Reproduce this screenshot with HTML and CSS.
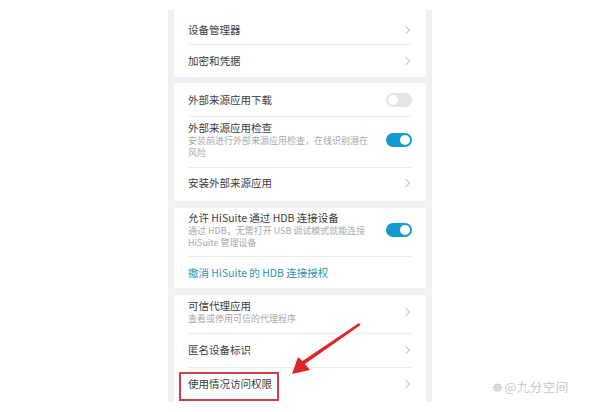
FILE: index.html
```html
<!DOCTYPE html>
<html lang="zh">
<head>
<meta charset="utf-8">
<link rel="stylesheet" href="styles.css">
</head>
<body>
<div class="stage">
  <div class="phone">
    <div class="card">
      <div class="row r35 first"><div class="txt"><div class="title">设备管理器</div></div><span class="chev"></span></div>
      <div class="row r32 last"><div class="txt"><div class="title">加密和凭据</div></div><span class="chev"></span></div>
    </div>
    <div class="card">
      <div class="row r34"><div class="txt"><div class="title">外部来源应用下载</div></div><span class="toggle"></span></div>
      <div class="row r51 multi"><div class="txt"><div class="title">外部来源应用检查</div><div class="sub">安装前进行外部来源应用检查，在线识别潜在<br>风险</div></div><span class="toggle on"></span></div>
      <div class="row r33 last up"><div class="txt"><div class="title">安装外部来源应用</div></div><span class="chev"></span></div>
    </div>
    <div class="card">
      <div class="row r49 multi"><div class="txt"><div class="title">允许 HiSuite 通过 HDB 连接设备</div><div class="sub">通过 HDB，无需打开 USB 调试模式就能连接<br>HiSuite 管理设备</div></div><span class="toggle on"></span></div>
      <div class="row r31 last"><div class="txt"><div class="title link">撤消 HiSuite 的 HDB 连接授权</div></div></div>
    </div>
    <div class="card">
      <div class="row r39 multi"><div class="txt"><div class="title">可信代理应用</div><div class="sub">查看或停用可信的代理程序</div></div><span class="chev"></span></div>
      <div class="row r34 up"><div class="txt"><div class="title">匿名设备标识</div></div><span class="chev"></span></div>
      <div class="row r35 last up"><div class="txt"><div class="title">使用情况访问权限</div></div><span class="chev"></span></div>
    </div>
  </div>
  <div class="highlight"></div>
  <svg class="arrow" width="80" height="60" viewBox="0 0 80 60">
    <path d="M75 4 L76.5 6 L21 45 L26 51 L8 55 L14 38 L18.5 42 Z" fill="#e0252a"/>
  </svg>
  <div class="watermark"><span class="wm-logo">☸</span>@九分空间</div>
</div>
</body>
</html>
```

FILE: styles.css
```css
html, body {
  margin: 0;
  padding: 0;
  background: #ffffff;
  overflow: hidden;
}
.stage {
  position: relative;
  width: 600px;
  height: 412px;
  box-sizing: border-box;
  padding-top: 10px;
  font-family: "Noto Sans CJK SC", "Noto Sans", sans-serif;
}
.phone {
  position: relative;
  margin-left: 168px;
  width: 252px;
  padding: 0 6px;
  height: 392px;
  background: #f1f1f1;
  display: flex;
  flex-direction: column;
  gap: 6px;
}
.card {
  background: #ffffff;
  display: flex;
  flex-direction: column;
}
.card + .card + .card { margin-top: 1px; }
.row {
  display: flex;
  align-items: center;
  padding: 0 14px;
  position: relative;
  box-sizing: border-box;
}
.row::after {
  content: "";
  position: absolute;
  left: 14px;
  right: 14px;
  bottom: 0;
  height: 1px;
  background: #ececec;
}
.row.last::after { display: none; }
.row.first { padding-top: 5px; }
.row.multi { padding-bottom: 5px; }
.row.up { padding-bottom: 3px; }
.r31 { height: 31px; }
.r32 { height: 32px; }
.r33 { height: 33px; }
.r34 { height: 34px; }
.r35 { height: 35px; }
.r39 { height: 39px; }
.r49 { height: 49px; }
.r51 { height: 51px; }
.txt { flex: 1; min-width: 0; }
.title {
  font-size: 10.5px;
  line-height: 14px;
  color: #3a3a3a;
  white-space: nowrap;
}
.title.link { color: #2a93b0; }
.sub {
  font-size: 9px;
  line-height: 12px;
  color: #a8a8a8;
  white-space: nowrap;
}
.chev {
  width: 5px;
  height: 5px;
  border-top: 1.3px solid #c4c4c4;
  border-right: 1.3px solid #c4c4c4;
  transform: rotate(45deg);
  margin-right: 3px;
  flex: none;
}
.toggle {
  flex: none;
  width: 26px;
  height: 14px;
  border-radius: 7px;
  background: #e4e4e4;
  position: relative;
}
.toggle::after {
  content: "";
  position: absolute;
  left: 2px;
  top: 2px;
  width: 10px;
  height: 10px;
  border-radius: 50%;
  background: #ffffff;
}
.toggle.on { background: #169bd0; }
.toggle.on::after { left: 14px; }
.highlight {
  position: absolute;
  left: 179px;
  top: 372px;
  width: 96px;
  height: 25px;
  border: 2px solid #c9444a;
}
.arrow {
  position: absolute;
  left: 284px;
  top: 319px;
}
.watermark {
  position: absolute;
  left: 492px;
  top: 377px;
  font-size: 12.5px;
  color: #c8c8c8;
  font-family: "Noto Sans CJK SC", sans-serif;
  letter-spacing: 0.5px;
}
.wm-logo {
  font-size: 12px;
  margin-right: 1px;
}
```
